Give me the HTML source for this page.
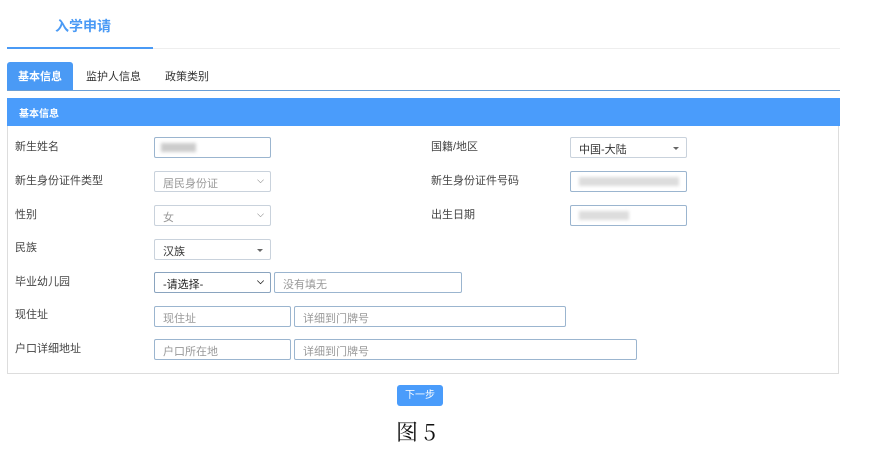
<!DOCTYPE html>
<html><head><meta charset="utf-8"><style>
body{margin:0;width:869px;height:460px;background:#fff;position:relative;overflow:hidden;font-family:"Liberation Sans","Noto Sans CJK SC",sans-serif;color:#333}
.a{position:absolute;white-space:nowrap}
.l{font-size:11px;color:#444}
.i{position:absolute;box-sizing:border-box;height:21px;border:1px solid #9bb5cf;border-radius:2px;background:#fff;font-size:11px;color:#999;padding:3px 0 0 8px;white-space:nowrap}
.s{border-color:#c9d2dc}
.ar{position:absolute;right:6px;top:3px;font-size:9px;color:#666}
.tri{position:absolute;right:7px;top:9px;width:0;height:0;border-left:3px solid transparent;border-right:3px solid transparent;border-top:3px solid #666}
.blur{position:absolute;height:9px;top:5px;background:#ccc;filter:blur(1.5px)}
</style></head><body>
<div class="a" style="left:55px;top:16px;font-size:14px;font-weight:bold;color:#4a9af5">入学申请</div>
<div class="a" style="left:7px;top:48px;width:833px;height:1px;background:#eee"></div>
<div class="a" style="left:7px;top:47px;width:146px;height:2px;background:#4a9af5"></div>
<div class="a" style="left:7px;top:62px;width:66px;height:29px;background:#4a9af5;border-radius:3px 3px 0 0"></div>
<div class="a" style="left:18px;top:68px;font-size:11px;color:#fff;font-weight:bold">基本信息</div>
<div class="a" style="left:86px;top:68px;font-size:11px;color:#333">监护人信息</div>
<div class="a" style="left:165px;top:68px;font-size:11px;color:#333">政策类别</div>
<div class="a" style="left:7px;top:90px;width:833px;height:1px;background:#6b9fd6"></div>
<div class="a" style="left:7px;top:98px;width:832px;height:276px;border:1px solid #ddd;box-sizing:border-box"></div>
<div class="a" style="left:7px;top:98px;width:833px;height:28px;background:#4a9cfb"></div>
<div class="a" style="left:19px;top:105px;font-size:10px;color:#fff;font-weight:bold">基本信息</div>

<div class="a l" style="left:15px;top:138px">新生姓名</div>
<div class="a l" style="left:15px;top:172px">新生身份证件类型</div>
<div class="a l" style="left:15px;top:206px">性别</div>
<div class="a l" style="left:15px;top:239px">民族</div>
<div class="a l" style="left:15px;top:273px">毕业幼儿园</div>
<div class="a l" style="left:15px;top:306px">现住址</div>
<div class="a l" style="left:15px;top:340px">户口详细地址</div>
<div class="a l" style="left:431px;top:138px">国籍/地区</div>
<div class="a l" style="left:431px;top:172px">新生身份证件号码</div>
<div class="a l" style="left:431px;top:206px">出生日期</div>

<div class="i" style="left:154px;top:137px;width:117px"><div class="blur" style="left:6px;width:35px"></div></div>
<div class="i s" style="left:154px;top:171px;width:117px">居民身份证<span class="ar">⌵</span></div>
<div class="i s" style="left:154px;top:205px;width:117px">女<span class="ar">⌵</span></div>
<div class="i s" style="left:154px;top:239px;width:117px;color:#333">汉族<span class="tri"></span></div>
<div class="i" style="left:154px;top:272px;width:117px;color:#222;border-color:#8aa4bf">-请选择-<span class="ar" style="color:#222;font-weight:bold">⌵</span></div>
<div class="i" style="left:274px;top:272px;width:188px">没有填无</div>
<div class="i" style="left:154px;top:306px;width:137px">现住址</div>
<div class="i" style="left:294px;top:306px;width:272px">详细到门牌号</div>
<div class="i" style="left:154px;top:339px;width:137px">户口所在地</div>
<div class="i" style="left:294px;top:339px;width:343px">详细到门牌号</div>

<div class="i s" style="left:570px;top:137px;width:117px;color:#333">中国-大陆<span class="tri"></span></div>
<div class="i" style="left:570px;top:171px;width:117px"><div class="blur" style="left:8px;width:100px;background:#ddd"></div></div>
<div class="i" style="left:570px;top:205px;width:117px"><div class="blur" style="left:8px;width:50px;background:#ddd"></div></div>

<div class="a" style="left:397px;top:385px;width:46px;height:21px;background:#4a9cfb;border-radius:3px;color:#fff;font-size:10px;text-align:center;line-height:21px">下一步</div>
<div class="a" style="left:396px;top:416px;font-size:22px;font-family:'Noto Serif CJK SC','Liberation Serif',serif;color:#111">图 5</div>
</body></html>
